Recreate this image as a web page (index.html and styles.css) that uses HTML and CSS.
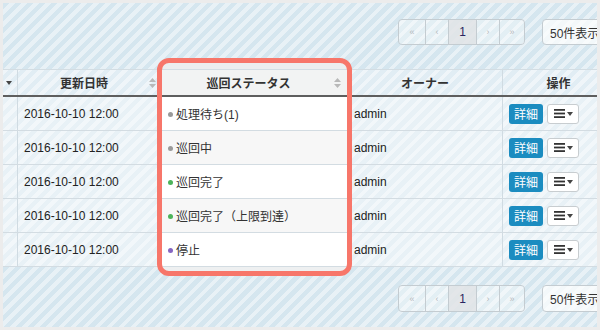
FILE: index.html
```html
<!DOCTYPE html>
<html lang="ja">
<head>
<meta charset="utf-8">
<title>巡回ステータス</title>
<link rel="stylesheet" href="styles.css">
</head>
<body>
<div class="stage">
  <div class="toolbar top">
    <div class="pager">
      <span class="pg first">«</span>
      <span class="pg prev">‹</span>
      <span class="pg cur">1</span>
      <span class="pg next">›</span>
      <span class="pg last">»</span>
    </div>
    <div class="perpage">50件表示</div>
  </div>

  <div class="grid">
    <div class="head">
      <div class="c c0"><svg class="caret" width="6" height="4" viewBox="0 0 6 4"><polygon points="0,0 6,0 3,4"/></svg></div>
      <div class="c c1 sortable"><span class="ht">更新日時</span><svg class="sort" width="7" height="10" viewBox="0 0 7 10"><polygon points="3.5,0 7,4 0,4"/><polygon points="0,6 7,6 3.5,10"/></svg></div>
      <div class="c c2 sortable"><span class="ht">巡回ステータス</span><svg class="sort" width="7" height="10" viewBox="0 0 7 10"><polygon points="3.5,0 7,4 0,4"/><polygon points="0,6 7,6 3.5,10"/></svg></div>
      <div class="c c3 center">オーナー</div>
      <div class="c c4 center">操作</div>
    </div>

    <div class="row">
      <div class="c c0"></div>
      <div class="c c1">2016-10-10 12:00</div>
      <div class="c c2"><i class="dot gray"></i>処理待ち(1)</div>
      <div class="c c3">admin</div>
      <div class="c c4"><span class="btn-detail">詳細</span><span class="btn-menu"><svg width="11" height="9" viewBox="0 0 11 9"><rect x="0" y="0" width="11" height="1.8"/><rect x="0" y="3.6" width="11" height="1.8"/><rect x="0" y="7.2" width="11" height="1.8"/></svg><svg class="caret" width="6" height="4" viewBox="0 0 6 4"><polygon points="0,0 6,0 3,4"/></svg></span></div>
    </div>
    <div class="row alt">
      <div class="c c0"></div>
      <div class="c c1">2016-10-10 12:00</div>
      <div class="c c2"><i class="dot gray"></i>巡回中</div>
      <div class="c c3">admin</div>
      <div class="c c4"><span class="btn-detail">詳細</span><span class="btn-menu"><svg width="11" height="9" viewBox="0 0 11 9"><rect x="0" y="0" width="11" height="1.8"/><rect x="0" y="3.6" width="11" height="1.8"/><rect x="0" y="7.2" width="11" height="1.8"/></svg><svg class="caret" width="6" height="4" viewBox="0 0 6 4"><polygon points="0,0 6,0 3,4"/></svg></span></div>
    </div>
    <div class="row">
      <div class="c c0"></div>
      <div class="c c1">2016-10-10 12:00</div>
      <div class="c c2"><i class="dot green"></i>巡回完了</div>
      <div class="c c3">admin</div>
      <div class="c c4"><span class="btn-detail">詳細</span><span class="btn-menu"><svg width="11" height="9" viewBox="0 0 11 9"><rect x="0" y="0" width="11" height="1.8"/><rect x="0" y="3.6" width="11" height="1.8"/><rect x="0" y="7.2" width="11" height="1.8"/></svg><svg class="caret" width="6" height="4" viewBox="0 0 6 4"><polygon points="0,0 6,0 3,4"/></svg></span></div>
    </div>
    <div class="row alt">
      <div class="c c0"></div>
      <div class="c c1">2016-10-10 12:00</div>
      <div class="c c2"><i class="dot green"></i>巡回完了（上限到達）</div>
      <div class="c c3">admin</div>
      <div class="c c4"><span class="btn-detail">詳細</span><span class="btn-menu"><svg width="11" height="9" viewBox="0 0 11 9"><rect x="0" y="0" width="11" height="1.8"/><rect x="0" y="3.6" width="11" height="1.8"/><rect x="0" y="7.2" width="11" height="1.8"/></svg><svg class="caret" width="6" height="4" viewBox="0 0 6 4"><polygon points="0,0 6,0 3,4"/></svg></span></div>
    </div>
    <div class="row">
      <div class="c c0"></div>
      <div class="c c1">2016-10-10 12:00</div>
      <div class="c c2"><i class="dot purple"></i>停止</div>
      <div class="c c3">admin</div>
      <div class="c c4"><span class="btn-detail">詳細</span><span class="btn-menu"><svg width="11" height="9" viewBox="0 0 11 9"><rect x="0" y="0" width="11" height="1.8"/><rect x="0" y="3.6" width="11" height="1.8"/><rect x="0" y="7.2" width="11" height="1.8"/></svg><svg class="caret" width="6" height="4" viewBox="0 0 6 4"><polygon points="0,0 6,0 3,4"/></svg></span></div>
    </div>
  </div>

  <div class="toolbar bottom">
    <div class="pager">
      <span class="pg first">«</span>
      <span class="pg prev">‹</span>
      <span class="pg cur">1</span>
      <span class="pg next">›</span>
      <span class="pg last">»</span>
    </div>
    <div class="perpage">50件表示</div>
  </div>

  <div class="highlight"></div>
</div>
</body>
</html>
```

FILE: styles.css
```css
html, body {
  margin: 0;
  padding: 0;
}
body {
  background: #ececec;
  padding: 3px;
  font-family: "Liberation Sans", "Noto Sans CJK JP", sans-serif;
  font-size: 12px;
  color: #222;
}
.stage {
  position: relative;
  width: 594px;
  height: 324px;
  overflow: hidden;
  background: repeating-linear-gradient(135deg, #d5e6ef 0 4.5px, #e8f1f6 4.5px 8.5px);
}

/* toolbars */
.toolbar {
  display: flex;
  justify-content: flex-end;
  align-items: stretch;
  gap: 17px;
  height: 26px;
  margin-right: -25px;
}
.toolbar.top { margin-top: 16px; }
.toolbar.bottom { margin-top: 18px; height: 27px; }

.pager {
  display: flex;
  border: 1px solid #c4ccd1;
  border-radius: 4px;
  overflow: hidden;
}
.pg {
  display: flex;
  align-items: center;
  justify-content: center;
  box-sizing: border-box;
  background: rgba(255, 255, 255, 0.35);
  color: #b5b9bc;
  font-size: 9px;
  border-left: 1px solid #c4ccd1;
}
.pg.first { width: 26px; border-left: 0; }
.pg.prev { width: 23px; }
.pg.cur {
  width: 28px;
  background: rgba(226, 228, 230, 0.85);
  color: #2a2560;
  font-size: 12px;
}
.pg.next { width: 23px; }
.pg.last { width: 25px; }

.perpage {
  width: 80px;
  box-sizing: border-box;
  border: 1px solid #c4ccd1;
  border-radius: 4px;
  background: rgba(255, 255, 255, 0.7);
  display: flex;
  align-items: center;
  padding-left: 7px;
  color: #333;
  font-size: 12px;
}

/* table grid */
.grid {
  margin-top: 24px;
  width: 611px;
}
.head, .row {
  display: grid;
  grid-template-columns: 14px 145px 185px 155px 112px;
}
.head {
  height: 25px;
  border-top: 1px solid #d3dde3;
  border-bottom: 2px solid #5e5e5e;
  background: rgba(255, 255, 255, 0.3);
  font-weight: bold;
  color: #333;
}
.row {
  height: 33px;
  border-bottom: 1px solid #d3dce2;
  background: rgba(255, 255, 255, 0.45);
}
.c {
  box-sizing: border-box;
  display: flex;
  align-items: center;
  padding: 0 6px;
  min-width: 0;
  white-space: nowrap;
}
.c0 {
  padding: 0 2px 0 0;
  justify-content: center;
}
.c1, .c3, .c4 {
  border-left: 1px solid #d0dbe2;
}
.center { justify-content: center; }
.head .c0 { padding-top: 1px; }

.sortable .ht {
  flex: 1;
  text-align: center;
  padding-right: 5px;
}
.sort { fill: #b8b8b8; flex: none; }
.caret { fill: #444; flex: none; }

/* highlighted column */
.head .c2 { background: #f2f3f3; }
.row .c2 { background: #ffffff; color: #333; }
.row.alt .c2 { background: #f7f7f7; }

.dot {
  width: 5px;
  height: 5px;
  border-radius: 50%;
  margin-right: 3px;
  margin-top: 1px;
  flex: none;
}
.dot.gray { background: #9a9a9a; }
.dot.green { background: #4cb35a; }
.dot.purple { background: #8566c2; }

/* action buttons */
.c4 { gap: 4px; }
.btn-detail {
  width: 34px;
  height: 20px;
  border-radius: 3px;
  background: #1b8cc0;
  color: #fff;
  font-size: 12px;
  display: flex;
  align-items: center;
  justify-content: center;
}
.btn-menu {
  width: 32px;
  height: 20px;
  box-sizing: border-box;
  border: 1px solid #c8cdd0;
  border-radius: 3px;
  background: #fff;
  display: flex;
  align-items: center;
  justify-content: center;
  gap: 2px;
}
.btn-menu svg:first-child { fill: #333; }

/* highlight overlay */
.highlight {
  position: absolute;
  left: 154px;
  top: 55px;
  width: 195px;
  height: 218px;
  box-sizing: border-box;
  border: 5px solid #f7766a;
  border-radius: 12px;
  background:
    linear-gradient(#eceeef, #eceeef) top / 100% 6px no-repeat,
    linear-gradient(#eef0f1, #eef0f1) bottom / 100% 4px no-repeat;
  pointer-events: none;
}
```
